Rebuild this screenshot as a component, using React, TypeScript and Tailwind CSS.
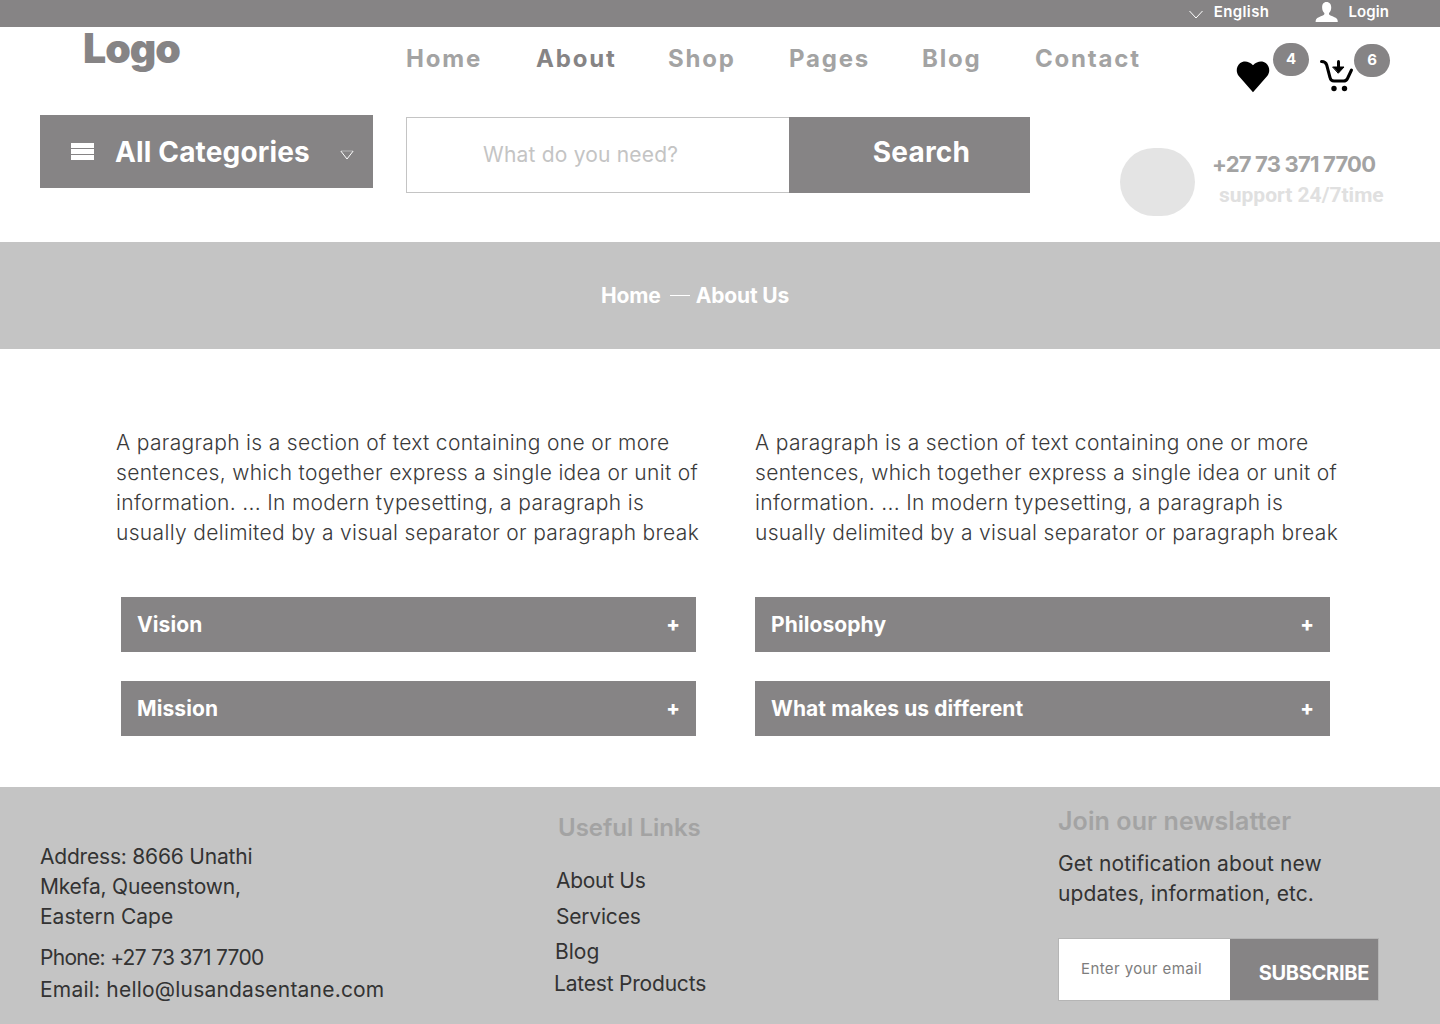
import React from 'react'

const paragraph =
  ['A paragraph is a section of text containing one or more', 'sentences, which together express a single idea or unit of', 'information. ... In modern typesetting, a paragraph is', 'usually delimited by a visual separator or paragraph break']

const navLinks = [
  { label: 'Home', className: 'w-[130px]' },
  { label: 'About', className: 'w-[132px]' },
  { label: 'Shop', className: 'w-[121px]' },
  { label: 'Pages', className: 'w-[133px]' },
  { label: 'Blog', className: 'w-[113px]' },
  { label: 'Contact', className: 'w-[130px]' },
]

const Chevron = ({ className }: { className: string }) => (
  <svg viewBox="0 0 14 9" className={className} fill="none" stroke="currentColor" strokeWidth="1">
    <path d="M.5 1l6.500 7 6.500-7" />
  </svg>
)

const Accordion = ({ title }: { title: string }) => (
  <div className="flex h-[55px] w-[575px] items-center justify-between bg-[#868485] pl-4 pr-[16px] text-[21px] font-bold tracking-[0.1px] text-white">
    <span className="pt-[1px]">{title}</span>
    <span className="pb-[2px] text-[20px] leading-none font-extrabold">+</span>
  </div>
)

const Paragraph = () => (
  <p className="pt-[1px] text-[21px] font-light leading-[30px] tracking-[0.33px] whitespace-nowrap text-[#3a3a3a]">
    {paragraph.map((line) => (
      <span key={line} className="block">{line}</span>
    ))}
  </p>
)

export default function App() {
  return (
    <div className="h-[1024px] w-[1440px] overflow-hidden bg-white font-['Inter',sans-serif]">
      {/* Top bar */}
      <div className="flex h-[27px] items-center justify-end bg-[#868485] pr-[51px] pb-[2px] text-[15px] font-semibold text-white">
        <Chevron className="mt-[3px] mr-[11px] h-[9px] w-[14px]" />
        <span className="mr-[46px] tracking-[0.4px]">English</span>
        <svg viewBox="0 0 24 22" className="mr-[10px] mb-[2px] h-[20px] w-[23px]" fill="currentColor">
          <path d="M12 0c3.400 0 5.200 2.600 5.200 6 0 2.600-1 4.600-2.400 6-.4 1.200.2 2.200 1.600 2.800 3 1.200 6.200 2.200 7.400 4.200.4.800.6 1.800.6 3H0c0-1.200.2-2.200.6-3 1.200-2 4.400-3 7.400-4.200 1.400-.6 2-1.600 1.600-2.800-1.400-1.400-2.400-3.400-2.400-6C7.200 2.600 8.600 0 12 0z" />
        </svg>
        <span className="tracking-[0.1px]">Login</span>
      </div>

      {/* Logo, nav, icons */}
      <div className="flex h-[88px]">
        <div className="ml-[83px] w-[323px] text-[41px] leading-[43px] font-black tracking-[-1px] text-[#868485]">Logo</div>
        <nav className="flex h-[64px] items-center text-[24px] font-bold tracking-[1.8px]">
          {navLinks.map((link) => (
            <a key={link.label} className={`${link.className} ${link.label === 'About' ? 'text-[#868485]' : 'text-[#a3a3a3]'}`}>
              {link.label}
            </a>
          ))}
        </nav>
        <div className="relative ml-[36px] w-[160px]">
          <svg viewBox="0 0 24 24" className="absolute top-[32px] left-[35px] h-[34px] w-[34px]" fill="#000">
            <path d="M12 23.500 1.800 11.800C-.2 9.200.2 5.200 2.800 3 5.200 1 9 1.200 12 4.400 15 1.200 18.800 1 21.200 3c2.600 2.200 3 6.200 1 8.800z" />
          </svg>
          <span className="absolute top-[16px] left-[72px] flex h-[33px] w-[36px] items-center justify-center rounded-full bg-[#868485] text-[15px] font-bold text-white">4</span>
          <svg viewBox="0 0 34 32" className="absolute top-[33px] left-[119px] h-[32px] w-[34px]" fill="none" stroke="#000" strokeWidth="3" strokeLinecap="round" strokeLinejoin="round">
            <path d="M1.500 1.500c3 0 4.500 1 5.200 3.500l3.300 12.500c.4 2 1.600 3.500 4 3.500h9.500c2 0 3.300-1 4-2.500l4-8.500" />
            <path d="M18.500 1.500v6" />
            <path d="M13 7h11l-5.500 6z" fill="#000" strokeWidth="1" />
            <circle cx="14" cy="28.500" r="2.700" fill="#000" stroke="none" />
            <circle cx="24.500" cy="28.500" r="2.700" fill="#000" stroke="none" />
          </svg>
          <span className="absolute top-[17px] left-[153px] flex h-[33px] w-[36px] items-center justify-center rounded-full bg-[#868485] text-[15px] font-bold text-white">6</span>
        </div>
      </div>

      {/* Categories, search, contact */}
      <div className="flex h-[127px] items-start pl-[40px]">
        <div className="flex h-[73px] w-[333px] items-center bg-[#868485] pl-[31px] text-white">
          <span className="flex h-[17px] w-[23px] flex-col justify-between">
            <span className="h-[5px] bg-white" />
            <span className="h-[5px] bg-white" />
            <span className="h-[5px] bg-white" />
          </span>
          <span className="ml-[21px] w-[225px] text-[28px] font-bold tracking-[0.15px]">All Categories</span>
          <svg viewBox="0 0 14 10" className="mt-[6px] h-[10px] w-[14px]" fill="none" stroke="currentColor">
            <path d="M1 1h12" strokeWidth=".4" />
            <path d="M.8 1 7 9l6.200-8" strokeWidth="1" />
          </svg>
        </div>
        <div className="mt-[2px] ml-[33px] flex h-[76px] w-[624px]">
          <div className="flex w-[383px] items-center border border-r-0 border-[#c4c4c4] pl-[76px] text-[21px] tracking-[0.2px] text-[#c4c4c4]">What do you need?</div>
          <div className="flex flex-1 items-center justify-center bg-[#868485] pb-[7px] pl-[24px] text-[28px] font-bold tracking-[0.2px] text-white">Search</div>
        </div>
        <div className="mt-[33px] ml-[90px] h-[68px] w-[75px] rounded-full bg-[#e4e4e4]" />
        <div className="mt-[33px] ml-[17px] font-bold">
          <div className="text-[22px] leading-[32px] tracking-[-0.8px] text-[#a3a3a3]">+27 73 371 7700</div>
          <div className="ml-[7px] font-['Roboto',sans-serif] text-[21px] leading-[30px] text-[#e0e0e0]">support 24/7time</div>
        </div>
      </div>

      {/* Breadcrumb */}
      <div className="flex h-[107px] items-center bg-[#c4c4c4] pl-[601px] text-[21px] font-bold tracking-[-0.15px] text-white">
        <span>Home</span>
        <span className="mr-[6px] ml-[9px] h-px w-[20px] bg-white" />
        <span>About Us</span>
      </div>

      {/* About content */}
      <div className="flex h-[438px] pt-[78px]">
        <div className="w-[755px]">
          <div className="pl-[116px]"><Paragraph /></div>
          <div className="mt-[49px] flex flex-col gap-[29px] pl-[121px]">
            <Accordion title="Vision" />
            <Accordion title="Mission" />
          </div>
        </div>
        <div>
          <Paragraph />
          <div className="mt-[49px] flex flex-col gap-[29px]">
            <Accordion title="Philosophy" />
            <Accordion title="What makes us different" />
          </div>
        </div>
      </div>

      {/* Footer */}
      <div className="flex h-[237px] bg-[#c4c4c4] text-[21px] text-[#333]">
        <div className="w-[514px] pt-[55px] pl-[40px]">
          <div className="leading-[30px]">
            <div className="tracking-[-0.2px]">Address: 8666 Unathi</div>
            <div className="tracking-[-0.2px]">Mkefa, Queenstown,</div>
            <div>Eastern Cape</div>
          </div>
          <div className="mt-[10px] leading-[32px]">
            <div className="tracking-[-0.7px]">Phone: +27 73 371 7700</div>
            <div className="tracking-[0.2px]">Email: hello@lusandasentane.com</div>
          </div>
        </div>
        <div className="w-[544px] pt-[25px]">
          <div className="ml-[44px] text-[24px] leading-[32px] font-semibold text-[#a3a3a3]">Useful Links</div>
          <div className="mt-[21px] ml-[42px] leading-[32px] tracking-[-0.3px]">About Us</div>
          <div className="mt-[4px] ml-[42px] leading-[32px] tracking-[-0.2px]">Services</div>
          <div className="mt-[3px] ml-[41px] leading-[32px]">Blog</div>
          <div className="ml-[40px] leading-[32px] tracking-[-0.2px]">Latest Products</div>
        </div>
        <div className="w-[320px] pt-[18px]">
          <div className="text-[25px] leading-[32px] font-semibold tracking-[0.1px] text-[#a3a3a3]">Join our newslatter</div>
          <div className="mt-[12px] leading-[30px] tracking-[0.1px] whitespace-nowrap">Get notification about new<br />updates, information, etc.</div>
          <div className="mt-[29px] flex h-[63px] w-[321px] border border-[#b5b5b5]">
            <div className="flex w-[171px] items-center bg-white pl-[22px] text-[15px] tracking-[0.4px] text-[#7d7d7d]">Enter your email</div>
            <div className="flex flex-1 items-center justify-end bg-[#868485] pt-[6px] pr-[9px] text-[20px] font-bold tracking-[-0.3px] text-white">SUBSCRIBE</div>
          </div>
        </div>
      </div>
    </div>
  )
}
